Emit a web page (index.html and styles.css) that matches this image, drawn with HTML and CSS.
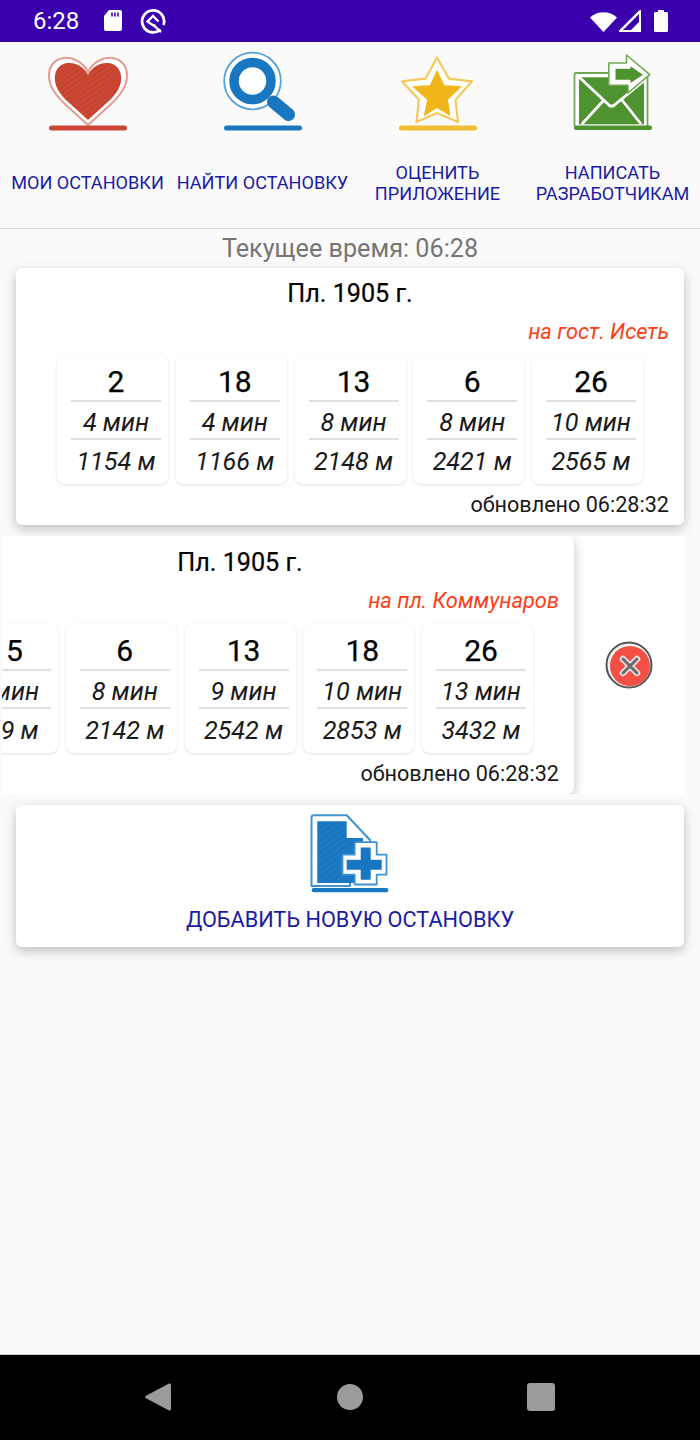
FILE: index.html
```html
<!DOCTYPE html>
<html lang="ru">
<head>
<meta charset="utf-8">
<title>Мои остановки</title>
<link rel="stylesheet" href="styles.css">
</head>
<body>
<div class="screen">
  <header class="status">
    <span class="clock">6:28</span>
    <svg class="st-sd" viewBox="0 0 18 21"><path d="M5 0H16a2 2 0 0 1 2 2V19a2 2 0 0 1-2 2H2a2 2 0 0 1-2-2V6Z" fill="#fff"/><path d="M8 2.500V6.500M11 2.500V6.500M14 2.500V6.500" stroke="#3a00ae" stroke-width="1.600"/></svg>
    <svg class="st-q" viewBox="0 0 26 26"><path d="M20.500 21.500A11 11 0 1 1 23.500 17" fill="none" stroke="#fff" stroke-width="2.800"/><path d="M15 18.500 7.500 13.500 13 8 18.500 13.500" fill="none" stroke="#fff" stroke-width="2.400"/><path d="M13.500 16.500 17.500 21 21 24" fill="none" stroke="#fff" stroke-width="2.400"/></svg>
    <span class="st-fill"></span>
    <svg class="st-wifi" viewBox="0 0 27 22"><path d="M0 7.500C7.500 .5 19.500 .5 27 7.500L13.500 22Z" fill="#fff"/></svg>
    <svg class="st-sig" viewBox="0 0 22 22"><path d="M21 1.500V21H1.500Z" fill="none" stroke="#fff" stroke-width="2"/><path d="M21 11V21H11Z" fill="#fff"/><path d="M1 21 21 1" stroke="#fff" stroke-width="2"/></svg>
    <svg class="st-bat" viewBox="0 0 14 22"><path d="M4 0H10V2H12.500A1.500 1.500 0 0 1 14 3.500V20.500A1.500 1.500 0 0 1 12.500 22H1.500A1.500 1.500 0 0 1 0 20.500V3.500A1.500 1.500 0 0 1 1.500 2H4Z" fill="#fff"/></svg>
  </header>

  <nav class="menu">
    <a class="menu-item">
      <svg class="menu-icon" viewBox="0 0 90 90">
        <defs><pattern id="h1" width="3" height="5" patternUnits="userSpaceOnUse" patternTransform="rotate(-35)"><rect width="3" height="1" fill="#fff" opacity=".06"/></pattern></defs>
        <path d="M45 22C40 12 30 7 21 8 11 9 5.500 17 6 27 6.500 38 14 47 24 56L45 75 66 56C76 47 83.500 38 84 27 84.500 17 79 9 69 8 60 7 50 12 45 22Z" fill="#fff" stroke="#e39a90" stroke-width="2"/>
        <g transform="translate(6.750 6.200) scale(.85)"><path d="M45 22C40 12 30 7 21 8 11 9 5.500 17 6 27 6.500 38 14 47 24 56L45 75 66 56C76 47 83.500 38 84 27 84.500 17 79 9 69 8 60 7 50 12 45 22Z" fill="#c8432f"/><path d="M45 22C40 12 30 7 21 8 11 9 5.500 17 6 27 6.500 38 14 47 24 56L45 75 66 56C76 47 83.500 38 84 27 84.500 17 79 9 69 8 60 7 50 12 45 22Z" fill="url(#h1)"/></g>
        <rect x="6" y="75.500" width="78" height="5" rx="2.500" fill="#cd4535"/>
      </svg>
      <span class="menu-label">МОИ ОСТАНОВКИ</span>
    </a>
    <a class="menu-item">
      <svg class="menu-icon" viewBox="0 0 90 90">
        <circle cx="34.500" cy="31" r="28.300" fill="#fff" stroke="#5aa3d8" stroke-width="1.800"/>
        <path d="M55.500 52 70.500 64.500" stroke="#1877c0" stroke-width="13" stroke-linecap="round"/>
        <circle cx="34.500" cy="31" r="18.500" fill="#fff" stroke="#1877c0" stroke-width="9.500"/>
        <rect x="6" y="75.500" width="78" height="5" rx="2.500" fill="#1877c0"/>
      </svg>
      <span class="menu-label">НАЙТИ ОСТАНОВКУ</span>
    </a>
    <a class="menu-item">
      <svg class="menu-icon" viewBox="0 0 90 90">
        <path d="M44 7.500 56 28.700 79 31.300 62.500 49.700 65 72 44 63 23.500 72 26 49.700 9 31.300 32.500 28.700Z" fill="#fff" stroke="#f4c95c" stroke-width="2.200" stroke-linejoin="round"/>
        <path d="M44 19.700 51.500 35.300 69 36.300 55 49.700 57.500 66.300 44 58 30.800 66.300 34 49.700 19 36.300 36.800 35.300Z" fill="#f2b61d"/>
        <rect x="6" y="75.500" width="78" height="5" rx="2.500" fill="#f3bd32"/>
      </svg>
      <span class="menu-label">ОЦЕНИТЬ ПРИЛОЖЕНИЕ</span>
    </a>
    <a class="menu-item">
      <svg class="menu-icon" viewBox="0 0 90 90">
        <rect x="6.500" y="23" width="73" height="54" rx="1.500" fill="#fff" stroke="#6fa853" stroke-width="1.800"/>
        <rect x="11" y="27.300" width="65" height="47" fill="#4f9330"/>
        <path d="M10 26 42 56 45 56 77 30M14 74 35 51M73 74 54 50" fill="none" stroke="#fff" stroke-width="2.800"/>
        <path d="M40.800 13H58.500V5L81.800 24.700 60 43V35.300H40.800Z" fill="#fff" stroke="#6fa853" stroke-width="1.600" stroke-linejoin="round"/>
        <path d="M47.500 18.700H62.500V16.300L75 24.700 62.500 33V29.700H47.500Z" fill="#4f9330"/>
        <rect x="6" y="75.500" width="78" height="4.500" rx="2" fill="#4f9330"/>
      </svg>
      <span class="menu-label">НАПИСАТЬ РАЗРАБОТЧИКАМ</span>
    </a>
  </nav>

  <main class="content">
    <p class="now">Текущее время: 06:28</p>

    <section class="card">
      <h2 class="stop">Пл. 1905 г.</h2>
      <p class="dir">на гост. Исеть</p>
      <div class="routes">
        <div class="route"><b>2</b><i>4 мин</i><i>1154 м</i></div>
        <div class="route"><b>18</b><i>4 мин</i><i>1166 м</i></div>
        <div class="route"><b>13</b><i>8 мин</i><i>2148 м</i></div>
        <div class="route"><b>6</b><i>8 мин</i><i>2421 м</i></div>
        <div class="route"><b>26</b><i>10 мин</i><i>2565 м</i></div>
      </div>
      <p class="upd">обновлено 06:28:32</p>
    </section>

    <section class="swipe">
      <button class="del" aria-label="Удалить">
        <svg viewBox="0 0 48 48">
          <circle cx="24" cy="24" r="22.500" fill="#f2f2f2" stroke="#555" stroke-width="2"/>
          <circle cx="25" cy="25" r="20" fill="#f44f45"/>
          <path d="M18 18 32 32M32 18 18 32" stroke="#e9e0df" stroke-width="6.500" stroke-linecap="round"/>
          <path d="M18 18 32 32M32 18 18 32" stroke="#6b6b6b" stroke-width="3" stroke-linecap="round"/>
        </svg>
      </button>
      <div class="card card-shifted">
        <h2 class="stop">Пл. 1905 г.</h2>
        <p class="dir">на пл. Коммунаров</p>
        <div class="routes">
          <div class="route"><b>15</b><i>8 мин</i><i>959 м</i></div>
          <div class="route"><b>6</b><i>8 мин</i><i>2142 м</i></div>
          <div class="route"><b>13</b><i>9 мин</i><i>2542 м</i></div>
          <div class="route"><b>18</b><i>10 мин</i><i>2853 м</i></div>
          <div class="route"><b>26</b><i>13 мин</i><i>3432 м</i></div>
        </div>
        <p class="upd">обновлено 06:28:32</p>
      </div>
    </section>

    <section class="card card-add">
      <svg class="add-icon" viewBox="0 0 80 80">
        <defs><pattern id="h2" width="3" height="5" patternUnits="userSpaceOnUse" patternTransform="rotate(-35)"><rect width="3" height="1" fill="#fff" opacity=".06"/></pattern></defs>
        <path d="M1.500 4A2 2 0 0 1 3.500 2.300H36.700L60 27V40H40V73H1.500Z" fill="#fff" stroke="#3f93d1" stroke-width="2" stroke-linejoin="round"/>
        <path d="M7.300 8.300H36.700V25H53V70H7.300Z" fill="#1877c0"/>
        <path d="M7.300 8.300H36.700V25H53V70H7.300Z" fill="url(#h2)"/>
        <path d="M44.700 29.200H66.700V41.700H76.500V61.700H66.700V71.500H44.700V61.700H32.500V41.700H44.700Z" fill="#fff" stroke="#3f93d1" stroke-width="1.800" stroke-linejoin="round"/>
        <path d="M50.700 34.500H60.700V46.700H71.700V56.700H60.700V66.700H50.700V56.700H36.700V46.700H50.700Z" fill="#1877c0"/>
        <rect x="1.700" y="75" width="76.600" height="4.200" rx="2" fill="#1877c0"/>
      </svg>
      <span class="add-label">ДОБАВИТЬ НОВУЮ ОСТАНОВКУ</span>
    </section>
  </main>

  <footer class="navbar">
    <svg class="nav-back" viewBox="0 0 26 30"><path d="M24 1.500A1.500 1.500 0 0 1 26 3V27A1.500 1.500 0 0 1 24 28.500L1 16.200A1.300 1.300 0 0 1 1 13.800Z" fill="#9b9b9b"/></svg>
    <span class="nav-home"></span>
    <span class="nav-recent"></span>
  </footer>
</div>
</body>
</html>
```

FILE: styles.css
```css
* { box-sizing: border-box; }
html, body { margin: 0; padding: 0; }
body { font-family: Roboto, "Liberation Sans", sans-serif; background: #fafafa; }
.screen { width: 700px; height: 1440px; display: flex; flex-direction: column; overflow: hidden; }

.status { height: 42px; flex: none; background: #3a00ae; border-bottom: 1px solid #3000a0; display: flex; align-items: center; color: #fff; padding-left: 33px; }
.clock { font-size: 24px; width: 71px; }
.st-sd { width: 18px; height: 21px; margin-right: 18px; }
.st-q { width: 26px; height: 26px; }
.st-fill { flex: 1; }
.st-wifi { width: 27px; height: 22px; margin-right: 2px; }
.st-sig { width: 22px; height: 22px; margin-right: 13px; }
.st-bat { width: 14px; height: 22px; margin-right: 32px; }

.menu { height: 187px; flex: none; display: grid; grid-template-columns: repeat(4, 175px); border-bottom: 1px solid #d9d9d9; background: #fafafa; }
.menu-item { display: flex; flex-direction: column; align-items: center; padding-top: 8px; }
.menu-icon { width: 90px; height: 90px; flex: none; filter: blur(.5px); }
.menu-label { height: 65px; display: flex; align-items: center; justify-content: center; text-align: center; font-size: 18.100px; line-height: 21px; color: #1a1aa5; margin-top: 10px; }

.content { flex: 1; display: flex; flex-direction: column; }
.now { margin: 0; height: 39px; line-height: 40px; text-align: center; font-size: 25.200px; color: #757575; }

.card { width: 668px; flex: none; margin-left: 16px; background: #fff; border-radius: 6px; box-shadow: 0 4px 12px rgba(0,0,0,.24); padding: 0 16px 7px; }
.stop { margin: 0; height: 50px; line-height: 52px; text-align: center; font-size: 25.200px; font-weight: 400; color: #000; -webkit-text-stroke: .2px #000; }
.dir { margin: 0 -1px 0 0; height: 28px; line-height: 28px; text-align: right; font-size: 21.800px; font-style: italic; color: #ff3d14; }
.routes { margin-top: 9px; display: flex; justify-content: center; gap: 7.750px; }
.route { width: 111px; height: 129px; flex: none; background: #fff; border-radius: 8px; box-shadow: 0 1px 3px rgba(0,0,0,.13); padding: 0 7px 0 14px; display: flex; flex-direction: column; }
.route b { height: 47px; line-height: 53px; text-align: center; font-size: 30px; font-weight: 400; color: #000; border-bottom: 2px solid #e0e0e0; -webkit-text-stroke: .25px #000; }
.route i { height: 38px; line-height: 42px; text-align: center; font-size: 25.200px; color: #1a1a1a; white-space: nowrap; }
.route i:nth-child(2) { border-bottom: 2px solid #e0e0e0; }
.route i:nth-child(3) { line-height: 44px; }
.upd { margin: 8px -1px 0 0; height: 26px; line-height: 26px; text-align: right; font-size: 21.600px; color: #1a1a1a; }

.swipe { height: 258px; flex: none; margin: 11px 16px 11px 2px; background: #fff; overflow: hidden; position: relative; }
.card-shifted { margin-left: -96px; position: relative; height: 258px; padding-top: 1px; }
.del { position: absolute; left: 603px; top: 105px; width: 48px; height: 48px; padding: 0; border: 0; background: none; }
.del svg { width: 48px; height: 48px; display: block; filter: blur(.3px); }

.card-add { height: 142px; padding: 8px 16px 0; display: flex; flex-direction: column; align-items: center; }
.add-icon { width: 80px; height: 80px; flex: none; filter: blur(.5px); }
.add-label { margin-top: 12px; font-size: 21.700px; line-height: 30px; color: #1a1aa5; }

.navbar { margin-top: auto; height: 86px; flex: none; background: #000; border-top: 1px solid #ccc; display: grid; grid-template-columns: repeat(3, 1fr); align-items: center; justify-items: center; padding: 0 0 1px; }
.nav-back { width: 26px; height: 30px; grid-column: 1; justify-self: start; margin-left: 145px; }
.nav-home { width: 26px; height: 26px; border-radius: 50%; background: #9b9b9b; grid-column: 2; }
.nav-recent { width: 28px; height: 28px; border-radius: 3px; background: #9b9b9b; grid-column: 3; justify-self: start; margin-left: 60px; }
```
